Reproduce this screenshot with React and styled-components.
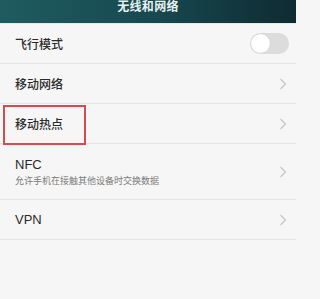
import React from 'react';
import styled, { createGlobalStyle } from 'styled-components';

const GlobalStyle = createGlobalStyle`
  html, body {
    margin: 0;
    padding: 0;
    background: #f6f6f6;
  }
  body {
    font-family: "Noto Sans CJK SC", "Liberation Sans", sans-serif;
  }
`;

const Screen = styled.div`
  width: 296px;
  height: 299px;
  overflow: hidden;
  background: #f6f6f6;
`;

const Header = styled.header`
  height: 24px;
  background: linear-gradient(90deg, #1f5b5f 0%, #174a50 50%, #0f2b32 100%);
  display: flex;
  justify-content: center;
  align-items: flex-start;
  overflow: hidden;
  border-bottom: 1px solid #e4eaea;
  box-sizing: border-box;
`;

const Title = styled.h1`
  margin: 0;
  font-size: 12px;
  line-height: 12px;
  font-weight: 700;
  color: #e8f0f0;
  letter-spacing: 0.3px;
`;

const List = styled.ul`
  list-style: none;
  margin: 0;
  padding: 0;
`;

const Row = styled.li`
  height: ${p => (p.$tall ? '55px' : '39px')};
  border-bottom: 1px solid #e3e3e3;
  display: flex;
  align-items: center;
  padding: 0 9px 0 15px;
  position: relative;
`;

const Texts = styled.div`
  flex: 1;
  display: flex;
  flex-direction: column;
  gap: 3px;
`;

const Label = styled.span`
  line-height: 15px;
  color: #2b2b2b;
  font-weight: 500;
  font-family: ${p => (p.$latin ? '"Liberation Sans", "Noto Sans CJK SC", sans-serif' : 'inherit')};
  font-size: ${p => (p.$latin ? '13px' : '12px')};
`;

const Sub = styled.span`
  font-size: 9px;
  line-height: 12px;
  color: #7a7a7a;
  white-space: nowrap;
`;

const Highlight = styled.div`
  position: absolute;
  left: 3px;
  top: 1px;
  width: 79px;
  height: 36px;
  border: 2px solid #d64a50;
`;

const Toggle = styled.div`
  width: 39px;
  height: 21px;
  border-radius: 11px;
  background: #dcdcdc;
  position: relative;
  margin-right: -2px;
`;

const Knob = styled.div`
  position: absolute;
  left: 1px;
  top: 1px;
  width: 19px;
  height: 19px;
  border-radius: 50%;
  background: #ffffff;
  box-shadow: 0 0 1px rgba(0, 0, 0, 0.15);
`;

const Chevron = () => (
  <svg width="8" height="12" viewBox="0 0 8 12">
    <path d="M1.5 1 L6.5 6 L1.5 11" fill="none" stroke="#c4c4c4" strokeWidth="1.1" />
  </svg>
);

export default function App() {
  return (
    <Screen>
      <GlobalStyle />
      <Header>
        <Title>无线和网络</Title>
      </Header>
      <List>
        <Row>
          <Texts><Label>飞行模式</Label></Texts>
          <Toggle><Knob /></Toggle>
        </Row>
        <Row>
          <Texts><Label>移动网络</Label></Texts>
          <Chevron />
        </Row>
        <Row>
          <Highlight />
          <Texts><Label>移动热点</Label></Texts>
          <Chevron />
        </Row>
        <Row $tall>
          <Texts>
            <Label $latin>NFC</Label>
            <Sub>允许手机在接触其他设备时交换数据</Sub>
          </Texts>
          <Chevron />
        </Row>
        <Row>
          <Texts><Label $latin>VPN</Label></Texts>
          <Chevron />
        </Row>
      </List>
    </Screen>
  );
}
